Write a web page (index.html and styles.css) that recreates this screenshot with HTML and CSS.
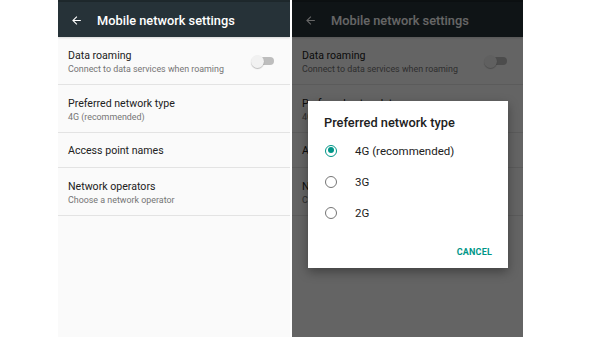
FILE: index.html
```html
<!DOCTYPE html>
<html>
<head>
<meta charset="utf-8">
<link rel="stylesheet" href="styles.css">
</head>
<body>
<div class="stage">
  <div class="phone">
    <div class="statusbar"></div>
    <div class="toolbar">
      <svg class="back" viewBox="0 0 24 24" width="13" height="13"><path d="M20 11H7.83l5.59-5.59L12 4l-8 8 8 8 1.41-1.41L7.83 13H20v-2z" fill="#fff"/></svg>
      <span class="title">Mobile network settings</span>
    </div>
    <div class="list">
      <div class="item tall">
        <div class="texts">
          <div class="primary">Data roaming</div>
          <div class="secondary">Connect to data services when roaming</div>
        </div>
        <div class="switch"><span class="track"></span><span class="thumb"></span></div>
      </div>
      <div class="item tall">
        <div class="texts">
          <div class="primary">Preferred network type</div>
          <div class="secondary">4G (recommended)</div>
        </div>
      </div>
      <div class="item short">
        <div class="texts">
          <div class="primary">Access point names</div>
        </div>
      </div>
      <div class="item tall">
        <div class="texts">
          <div class="primary">Network operators</div>
          <div class="secondary">Choose a network operator</div>
        </div>
      </div>
    </div>
  </div>

  <div class="phone">
    <div class="statusbar"></div>
    <div class="toolbar">
      <svg class="back" viewBox="0 0 24 24" width="13" height="13"><path d="M20 11H7.83l5.59-5.59L12 4l-8 8 8 8 1.41-1.41L7.83 13H20v-2z" fill="#fff"/></svg>
      <span class="title">Mobile network settings</span>
    </div>
    <div class="list">
      <div class="item tall">
        <div class="texts">
          <div class="primary">Data roaming</div>
          <div class="secondary">Connect to data services when roaming</div>
        </div>
        <div class="switch"><span class="track"></span><span class="thumb"></span></div>
      </div>
      <div class="item tall">
        <div class="texts">
          <div class="primary">Preferred network type</div>
          <div class="secondary">4G (recommended)</div>
        </div>
      </div>
      <div class="item short">
        <div class="texts">
          <div class="primary">Access point names</div>
        </div>
      </div>
      <div class="item tall">
        <div class="texts">
          <div class="primary">Network operators</div>
          <div class="secondary">Choose a network operator</div>
        </div>
      </div>
    </div>
    <div class="scrim"></div>
    <div class="dialog">
      <div class="dlg-title">Preferred network type</div>
      <div class="option"><span class="radio checked"></span><span class="opt-label">4G (recommended)</span></div>
      <div class="option"><span class="radio"></span><span class="opt-label">3G</span></div>
      <div class="option"><span class="radio"></span><span class="opt-label">2G</span></div>
      <div class="actions"><span class="btn">CANCEL</span></div>
    </div>
  </div>
</div>
</body>
</html>
```

FILE: styles.css
```css
html, body {
  margin: 0;
  padding: 0;
  background: #ffffff;
}
body {
  font-family: Roboto, "Liberation Sans", sans-serif;
}
.stage {
  display: flex;
  gap: 2px;
  padding-left: 58px;
  height: 337px;
}
.phone {
  position: relative;
  width: 232px;
  height: 337px;
  background: #fafafa;
  display: flex;
  flex-direction: column;
  overflow: hidden;
}
.phone + .phone {
  width: 231px;
}
.statusbar {
  height: 2px;
  background: #1e282c;
}
.toolbar {
  height: 35px;
  background: #263238;
  display: flex;
  align-items: center;
  padding-left: 12px;
  padding-top: 1px;
  box-sizing: border-box;
  box-shadow: 0 1px 2px rgba(0,0,0,0.15);
}
.back {
  display: block;
  margin-right: 14px;
}
.title {
  color: #ffffff;
  font-size: 12.8px;
  font-weight: 500;
}
.list {
  display: flex;
  flex-direction: column;
}
.item {
  display: flex;
  align-items: center;
  padding: 0 16px 0 10px;
  border-bottom: 1px solid #e3e3e3;
}
.item.tall {
  height: 47px;
}
.item.short {
  height: 34px;
}
.texts {
  flex: 1;
  padding-top: 1px;
}
.primary {
  font-size: 10.6px;
  color: #212121;
  line-height: 15px;
}
.secondary {
  font-size: 8.9px;
  color: #757575;
  line-height: 12px;
}
.switch {
  position: relative;
  width: 23px;
  height: 13px;
  margin-top: 1px;
}
.track {
  position: absolute;
  left: 8px;
  top: 2.5px;
  width: 15px;
  height: 8px;
  border-radius: 4px;
  background: #bdbdbd;
}
.thumb {
  position: absolute;
  left: 0;
  top: 0;
  width: 13px;
  height: 13px;
  border-radius: 50%;
  background: #f1f1f1;
  box-shadow: 0 1px 1px rgba(0,0,0,0.25);
}
.scrim {
  position: absolute;
  inset: 0;
  background: rgba(0,0,0,0.6);
}
.dialog {
  position: absolute;
  left: 16px;
  top: 101px;
  width: 200px;
  height: 167px;
  background: #ffffff;
  box-shadow: 0 4px 10px rgba(0,0,0,0.35);
  box-sizing: border-box;
  padding: 12px 16px 0 16px;
  display: flex;
  flex-direction: column;
}
.dlg-title {
  font-size: 12.8px;
  font-weight: 500;
  color: #212121;
  height: 19px;
  line-height: 19px;
  margin-bottom: 3px;
}
.option {
  display: flex;
  align-items: center;
  height: 31px;
}
.radio {
  box-sizing: border-box;
  width: 12px;
  height: 12px;
  border-radius: 50%;
  border: 1.5px solid #757575;
  margin-left: 1px;
  margin-right: 18px;
  position: relative;
}
.radio.checked {
  border-color: #009688;
}
.radio.checked::after {
  content: "";
  position: absolute;
  left: 1.5px;
  top: 1.5px;
  width: 6px;
  height: 6px;
  border-radius: 50%;
  background: #009688;
}
.opt-label {
  font-size: 11.5px;
  color: #212121;
}
.actions {
  display: flex;
  justify-content: flex-end;
  margin-top: 19px;
}
.btn {
  font-size: 9px;
  font-weight: 700;
  color: #009688;
  letter-spacing: 0.2px;
}
```
